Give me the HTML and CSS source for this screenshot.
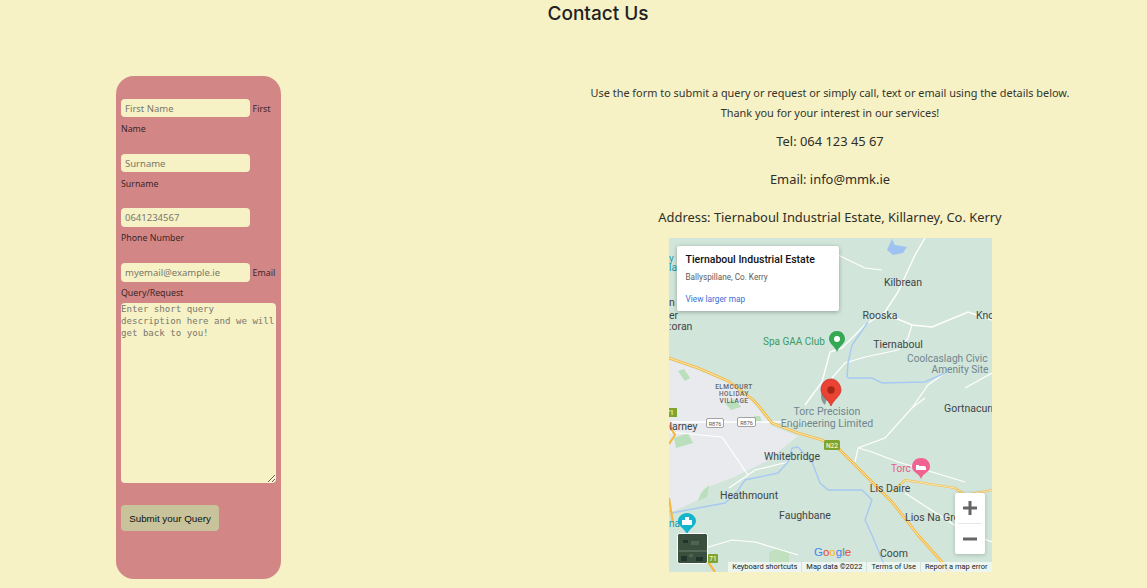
FILE: index.html
```html
<!DOCTYPE html>
<html lang="en">
<head>
<meta charset="utf-8">
<title>Contact Us</title>
<link rel="stylesheet" href="styles.css">
</head>
<body>
<h1 class="title">Contact Us</h1>
<main class="content">
  <form class="query-form">
    <div class="field"><input class="text-input" placeholder="First Name"> <label class="field-label">First Name</label></div>
    <div class="field field-short"><input class="text-input" placeholder="Surname"> <label class="field-label">Surname</label></div>
    <div class="field"><input class="text-input tall" placeholder="0641234567"> <label class="field-label">Phone Number</label></div>
    <div class="field field-tight"><input class="text-input tall" placeholder="myemail@example.ie"> <label class="field-label">Email</label></div>
    <label class="field-label block-label">Query/Request</label>
    <textarea class="query-text" placeholder="Enter short query description here and we will get back to you!"></textarea>
    <button class="submit" type="button">Submit your Query</button>
  </form>
  <section class="details">
    <p class="intro">Use the form to submit a query or request or simply call, text or email using the details below.</p>
    <p class="intro">Thank you for your interest in our services!</p>
    <p class="contact first-contact">Tel: 064 123 45 67</p>
    <p class="contact">Email: info@mmk.ie</p>
    <p class="contact">Address: Tiernaboul Industrial Estate, Killarney, Co. Kerry</p>
    <div class="map">
      <svg class="map-art" viewBox="0 0 323 334" width="323" height="334">
        <rect width="323" height="334" fill="#d1e5da"/>
        <path d="M0 122 L29 132 L59 145 L83 163 L103 188 L129 198 L96 224 L63 240 L36 250 L29 262 L3 274 L0 274Z" fill="#e8eaed"/>
        <path d="M9 133 l6 -2 l6 9 l-5 3Z M56 165 l10 -4 l6 8 l-10 3Z M5 200 l14 -5 l5 10 l-17 5Z M32 255 l8 -8 l-2 12 l-9 4Z M85 178 l6 0 l2 6 l-6 1Z" fill="#b9dfbd"/>
        <path d="M100 315 q10 -8 20 0 l0 12 l-20 0Z" fill="#c0e0c0"/>
        <g fill="none" stroke="#fff" stroke-width="1.200">
          <path d="M169 17 L196 30 L213 32"/>
          <path d="M256 0 L246 17 L229 54 L216 74 L196 87 L173 110 L161 114 L153 144 L136 167" stroke-width="1.400"/>
          <path d="M216 76 L226 80 L243 87 L263 89 L299 74 L323 82" stroke-width="1.400"/>
          <path d="M243 87 L239 100 L229 112 L196 119 L176 125 L163 140"/>
          <path d="M0 194 L53 199 L79 237"/>
          <path d="M0 184 H139" stroke-width="1.400"/>
          <path d="M119 224 L86 232 L79 237 L60 250"/>
          <path d="M189 210 L203 214 L229 224 L263 234 L296 244"/>
          <path d="M186 224 L189 210 L216 200 L243 170 L256 160"/>
          <path d="M36 310 L63 302 L86 304 L129 317"/>
          <path d="M236 255 L296 294 L323 304"/>
          <path d="M276 135 L259 147 L243 170"/>
          <path d="M296 150 L323 135"/>
        </g>
        <path d="M223 1 L226 7 L238 9 L234 15 L224 17 L218 12Z" fill="#9fc3f0"/>
        <g fill="none" stroke="#a8c9f2" stroke-width="1.400">
          <path d="M129 209 L123 210 L119 224 L109 235 L76 242 L68 254 L56 265 L29 270 L3 275 L0 273"/>
          <path d="M129 209 L143 224 L151 245 L159 252 L193 252 L203 262 L196 282 L203 297 L214 324 L218 334"/>
          <path d="M199 84 L183 107 L179 125 L178 140"/>
          <path d="M179 140 L203 140 L213 145 L256 144 L276 135"/>
        </g>
        <g fill="none" stroke="#f4b942" stroke-width="2.800" stroke-linejoin="round">
          <path d="M0 120 L29 130 L59 143 L83 161 L89 167 L103 185 L129 195 L153 202 L169 210 L196 237 L223 264 L249 297 L273 324 L280 334"/>
          <path d="M223 254 L236 242 L286 250 L296 257 L323 252" stroke-width="2.200"/>
          <path d="M0 187 L6 197 L0 206" stroke-width="2.200"/>
          <path d="M0 260 L4 285" stroke-width="2.200"/>
          <path d="M39 324 L46 334" stroke-width="2.200"/>
        </g>
        <g fill="none" stroke="#fdf3d0" stroke-width=".8">
          <path d="M0 120 L29 130 L59 143 L83 161 L89 167 L103 185 L129 195 L153 202 L169 210 L196 237 L223 264 L249 297 L273 324 L280 334"/>
          <path d="M223 254 L236 242 L286 250 L296 257 L323 252"/>
        </g>
        <g fill="#fff" stroke="#8d8d8d" stroke-width="0.800">
          <rect x="37.500" y="180.500" width="17" height="9" rx="1.500"/>
          <rect x="68.500" y="179.500" width="18" height="9" rx="1.500"/>
        </g>
        <text class="road-no" x="46" y="187.500">R876</text>
        <text class="road-no" x="77.500" y="186.500">R876</text>
        <g fill="#7fa52f">
          <rect x="155" y="202" width="16" height="10" rx="1.500"/>
          <rect x="0" y="170" width="8" height="9"/>
          <rect x="39" y="316" width="10" height="9" rx="1"/>
        </g>
        <text class="shield" x="163" y="210">N22</text>
        <text class="shield" x="1" y="177" text-anchor="start">71</text>
        <text class="shield" x="44" y="323">71</text>
        <path d="M168 93 C162 93 160 98 160 101 C160 106 166 108 168 114 C170 108 176 106 176 101 C176 98 174 93 168 93Z" fill="#34a853"/>
        <circle cx="168" cy="101" r="3" fill="#fff"/>
        <path d="M156 167 C158 160 160 156 163 148 L155 151 C150 157 152 163 156 167Z" fill="#6d7d79" opacity=".75"/>
        <path d="M162 141 C154 141 152 148 152 152 C152 158 159 161 162 168 C165 161 172 158 172 152 C172 148 169 141 162 141Z" fill="#ea4335" stroke="#c5221f" stroke-width=".6"/>
        <circle cx="162" cy="152" r="3.700" fill="#a52714"/>
        <path d="M252 220 C246 220 243 224 243 229 C243 234 250 235 252 241 C254 235 261 234 261 229 C261 224 258 220 252 220Z" fill="#f06292"/>
        <path d="M247 227 h3 v1 h5 q2 0 2 2 v2 h-10Z" fill="#fff"/>
        <path d="M18 275 C13 275 9 279 9 283 C9 288 15 290 18 296 C21 290 27 288 27 283 C27 279 23 275 18 275Z" fill="#12b5cb"/>
        <path d="M13 287 h10 v-5 h-3 v-3 h-4 v3 h-3Z" fill="#fff"/>
        <text class="place" x="234" y="48" text-anchor="middle">Kilbrean</text>
        <text class="place" x="211" y="81" text-anchor="middle">Rooska</text>
        <text class="place" x="229" y="110" text-anchor="middle">Tiernaboul</text>
        <text class="place" x="307" y="81">Knc</text>
        <text class="place" x="0" y="92">:oran</text>
        <text class="place" x="0" y="68">n</text>
        <text class="place" x="0" y="81">er</text>
        <text class="poi-teal" x="0" y="24">y l</text>
        <text class="poi-teal" x="0" y="33">la</text>
        <text class="place" x="275" y="174">Gortnacurr</text>
        <text class="place" x="0.500" y="192">larney</text>
        <text class="place" x="123" y="222" text-anchor="middle">Whitebridge</text>
        <text class="place" x="80" y="261" text-anchor="middle">Heathmount</text>
        <text class="place" x="136" y="281" text-anchor="middle">Faughbane</text>
        <text class="place" x="221" y="254" text-anchor="middle">Lis Daire</text>
        <text class="place" x="236" y="283">Lios Na Gre</text>
        <text class="place" x="225" y="319" text-anchor="middle">Coom</text>
        <text class="poi" x="94" y="107">Spa GAA Club</text>
        <text class="poi-grey poi-small" x="238" y="124">Coolcaslagh Civic</text>
        <text class="poi-grey poi-small" x="291" y="135" text-anchor="middle">Amenity Site</text>
        <text class="poi-grey" x="158" y="177" text-anchor="middle">Torc Precision</text>
        <text class="poi-grey" x="158" y="189" text-anchor="middle">Engineering Limited</text>
        <text class="village" x="65" y="151" text-anchor="middle">ELMCOURT</text>
        <text class="village" x="65" y="158" text-anchor="middle">HOLIDAY</text>
        <text class="village" x="65" y="165" text-anchor="middle">VILLAGE</text>
        <text class="torc" x="222" y="234">Torc</text>
        <text class="poi-teal" x="0" y="289">na</text>
        <text class="google" x="145" y="318"><tspan fill="#4285f4">G</tspan><tspan fill="#ea4335">o</tspan><tspan fill="#fbbc04">o</tspan><tspan fill="#4285f4">g</tspan><tspan fill="#34a853">l</tspan><tspan fill="#ea4335">e</tspan></text>
        <rect x="8.500" y="295.500" width="30" height="30" rx="2" fill="#3b4f3e" stroke="#fff"/>
        <path d="M10 313 H38" stroke="#8b9a85" stroke-width=".7"/>
        <path d="M14 302 h5 v3 h-5Z M27 319 h7 v4 h-7Z M12 318 h6 v5 h-6Z" fill="#243329"/>
        <path d="M22 303 h8 v4 h-8Z M20 316 h4 v3 h-4Z" fill="#506550"/>
      </svg>
      <div class="info-card">
        <div class="info-title">Tiernaboul Industrial Estate</div>
        <div class="info-sub">Ballyspillane, Co. Kerry</div>
        <div class="info-link">View larger map</div>
      </div>
      <div class="zoom-box">
        <div class="zoom-btn">
          <svg width="14" height="14" viewBox="0 0 14 14"><path d="M0 7H14M7 0V14" stroke="#666" stroke-width="3"/></svg>
        </div>
        <div class="zoom-sep"></div>
        <div class="zoom-btn">
          <svg width="14" height="14" viewBox="0 0 14 14"><path d="M0 7H14" stroke="#666" stroke-width="3"/></svg>
        </div>
      </div>
      <div class="attribution">
        <span>Keyboard shortcuts</span><span>Map data ©2022</span><span>Terms of Use</span><span>Report a map error</span>
      </div>
    </div>
  </section>
</main>
</body>
</html>
```
FILE: styles.css
```css
* { box-sizing: border-box; }
html, body { margin: 0; padding: 0; }
body {
  width: 1147px;
  height: 588px;
  overflow: hidden;
  background: #f7f1c6;
  color: #2b2b2b;
  font-family: "Open Sans", "Noto Sans", sans-serif;
}
.title {
  margin: 0;
  padding-left: 49px;
  height: 76px;
  font: 500 19px/27px Inter, "Open Sans", sans-serif;
  text-align: center;
  color: #222;
}
.content {
  display: flex;
  align-items: flex-start;
  padding-left: 116px;
}
.query-form {
  width: 165px;
  height: 503px;
  flex: none;
  padding: 23px 5px 0;
  background: #d38686;
  border-radius: 18px;
}
.field {
  min-height: 55px;
  font-size: 10px;
  line-height: 20px;
}
.field-short { min-height: 54px; }
.field-tight { min-height: 20px; }
.field-label {
  font: 400 8.800px/20px "Noto Sans", sans-serif;
  color: #3a2626;
  vertical-align: top;
}
.block-label {
  display: block;
  height: 10px;
  margin: 5px 0;
  line-height: 10px;
}
.text-input {
  width: 129px;
  height: 18px;
  padding: 0 4px;
  border: 0;
  border-radius: 4px;
  background: #f7f1c6;
  font: 9.500px "Noto Sans", sans-serif;
  vertical-align: top;
}
.text-input.tall { height: 19px; }
.text-input::placeholder { color: #77786c; }
.query-text {
  display: block;
  width: 155px;
  height: 180px;
  padding: 0;
  border: 0;
  border-radius: 4px;
  background: #f7f1c6;
  font: 9.100px/12px "DejaVu Sans Mono", monospace;
}
.query-text::placeholder { color: #77786c; }
.submit {
  display: block;
  margin-top: 22px;
  width: 98px;
  height: 26px;
  padding: 0;
  border: 0;
  border-radius: 4px;
  background: #c8c39b;
  color: #111;
  font: 9.800px "Liberation Sans", sans-serif;
}
.details {
  width: 480px;
  margin-left: 309px;
  padding-top: 7px;
  text-align: center;
}
.intro {
  margin: 0;
  font: 400 10.900px/20px "Noto Sans", sans-serif;
  color: #33352c;
}
.contact {
  margin: 0 0 18px;
  font: 400 12.900px/20px "Noto Sans", sans-serif;
  color: #2f2f26;
}
.first-contact { margin-top: 8px; }
.map {
  position: relative;
  width: 323px;
  height: 334px;
  margin: -7px auto 0;
  overflow: hidden;
  text-align: left;
}
.map-art { display: block; }
.map-art text { font-family: Roboto, sans-serif; }
.road-no { font-size: 5.500px; text-anchor: middle; fill: #555; }
.shield { font-size: 6.500px; font-weight: 500; text-anchor: middle; fill: #f3f3c0; }
.place { font-size: 10.500px; fill: #3f4446; }
.poi { font-size: 10px; fill: #3a9a62; }
.poi-grey { font-size: 10.500px; fill: #70868f; }
.poi-small { font-size: 10.200px; }
.village { font-size: 6.500px; font-weight: 500; letter-spacing: .5px; fill: #5f6368; }
.torc { font-size: 10px; fill: #e8598a; }
.poi-teal { font-size: 10px; fill: #129eb2; }
.map-art .google { font-size: 11.500px; font-family: "Liberation Sans", sans-serif; }
.info-card {
  position: absolute;
  left: 8px;
  top: 8px;
  width: 162px;
  height: 65px;
  padding: 8px 9px;
  background: #fff;
  border-radius: 2px;
  box-shadow: 0 1px 4px rgba(0, 0, 0, .3);
  font-family: Roboto, sans-serif;
}
.info-title { font-size: 10.500px; line-height: 12px; font-weight: 500; color: #111; }
.info-sub { margin-top: 6px; font-size: 8.200px; line-height: 11px; color: #5b5b5b; }
.info-link { margin-top: 11px; font-size: 8.300px; line-height: 11px; color: #3a6fd8; }
.zoom-box {
  position: absolute;
  left: 286px;
  top: 255px;
  width: 30px;
  height: 61px;
  background: #fff;
  border-radius: 2px;
  box-shadow: 0 1px 4px rgba(0, 0, 0, .2);
}
.zoom-btn { display: flex; align-items: center; justify-content: center; height: 30px; }
.zoom-sep { height: 1px; margin: 0 3px; background: #e6e6e6; }
.attribution {
  position: absolute;
  right: 0;
  bottom: 0;
  display: flex;
  gap: 1px;
  height: 10px;
  font: 7.500px/10px Roboto, sans-serif;
  color: #222;
}
.attribution span { padding: 0 4px; background: rgba(255, 255, 255, .6); }
```
